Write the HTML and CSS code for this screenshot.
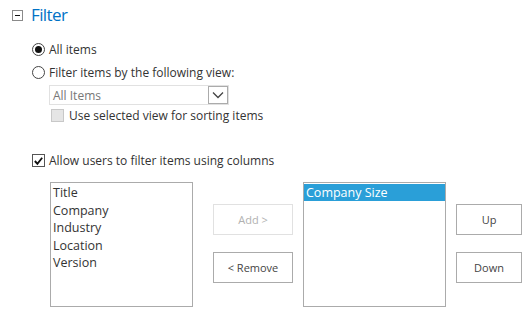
FILE: index.html
```html
<!DOCTYPE html>
<html>
<head>
<meta charset="utf-8">
<link rel="stylesheet" href="styles.css">
</head>
<body>
<div class="page">
  <div class="header">
    <span class="collapse"><span class="minus"></span></span>
    <span class="title">Filter</span>
  </div>
  <div class="options">
    <div class="row radio-row first">
      <span class="radio checked"><span class="dot"></span></span>
      <span class="label">All items</span>
    </div>
    <div class="row radio-row">
      <span class="radio"></span>
      <span class="label">Filter items by the following view:</span>
    </div>
    <div class="select">
      <span class="select-text">All Items</span>
      <span class="select-arrow">
        <svg width="12" height="8" viewBox="0 0 12 8"><path d="M1 1.5 L6 6.5 L11 1.5" fill="none" stroke="#444" stroke-width="1.3"/></svg>
      </span>
    </div>
    <div class="row sub-row">
      <span class="checkbox disabled"></span>
      <span class="label">Use selected view for sorting items</span>
    </div>
    <div class="row allow-row">
      <span class="checkbox checked">
        <svg width="12" height="12" viewBox="0 0 12 12"><path d="M2 6 L4.8 9 L10 2.5" fill="none" stroke="#111" stroke-width="2"/></svg>
      </span>
      <span class="label">Allow users to filter items using columns</span>
    </div>
  </div>
  <div class="columns">
    <div class="listbox">
      <div class="item">Title</div>
      <div class="item">Company</div>
      <div class="item">Industry</div>
      <div class="item">Location</div>
      <div class="item">Version</div>
    </div>
    <div class="buttons mid">
      <div class="btn disabled">Add &gt;</div>
      <div class="btn">&lt; Remove</div>
    </div>
    <div class="listbox right">
      <div class="item selected">Company Size</div>
    </div>
    <div class="buttons side">
      <div class="btn small">Up</div>
      <div class="btn small">Down</div>
    </div>
  </div>
</div>
</body>
</html>
```

FILE: styles.css
```css
html, body {
  margin: 0;
  padding: 0;
  background: #fff;
}
.page {
  font-family: "Open Sans", "Noto Sans", sans-serif;
  font-size: 12px;
  color: #333;
  width: 532px;
  height: 318px;
  overflow: hidden;
}
.header {
  display: flex;
  align-items: center;
  padding-left: 12px;
  padding-top: 2px;
  height: 24px;
}
.collapse {
  width: 9px;
  height: 9px;
  border: 1px solid #8a8a8a;
  display: flex;
  align-items: center;
  justify-content: center;
  margin-top: 2px;
}
.minus {
  width: 5px;
  height: 1px;
  background: #111;
}
.title {
  margin-left: 8px;
  font-size: 17px;
  color: #0072c6;
  letter-spacing: -0.6px;
}
.options {
  padding-left: 32px;
  display: flex;
  flex-direction: column;
}
.row {
  display: flex;
  align-items: center;
  height: 23px;
}
.first {
  margin-top: 12px;
}
.label {
  margin-left: 4px;
  white-space: nowrap;
}
.radio {
  width: 11px;
  height: 11px;
  border: 1px solid #444;
  border-radius: 50%;
  display: flex;
  align-items: center;
  justify-content: center;
  box-sizing: content-box;
}
.dot {
  width: 7px;
  height: 7px;
  border-radius: 50%;
  background: #111;
}
.select {
  margin-left: 17px;
  margin-top: 1px;
  width: 178px;
  height: 18px;
  border: 1px solid #e1e1e1;
  display: flex;
  align-items: center;
  justify-content: space-between;
}
.select-text {
  margin-left: 3px;
  color: #777;
}
.select-arrow {
  width: 18px;
  height: 16px;
  border: 1px solid #ababab;
  display: flex;
  align-items: center;
  justify-content: center;
}
.sub-row {
  margin-left: 19px;
  height: 20px;
}
.checkbox {
  width: 11px;
  height: 11px;
  border: 1px solid #555;
  display: flex;
  align-items: center;
  justify-content: center;
}
.checkbox.disabled {
  background: #e5e5e5;
  border-color: #c8c8c8;
}
.checkbox.disabled + .label {
  margin-left: 5px;
}
.allow-row {
  margin-top: 24px;
}
.columns {
  display: flex;
  margin-top: 10px;
  padding-left: 50px;
  align-items: flex-start;
}
.listbox {
  width: 141px;
  height: 122px;
  border: 1px solid #ababab;
  padding-top: 1px;
  box-sizing: content-box;
}
.item {
  padding-left: 2px;
  height: 17.5px;
  line-height: 17px;
  font-size: 12.5px;
  white-space: nowrap;
}
.item.selected {
  background: #2a9fd8;
  color: #fff;
  height: 17px;
}
.listbox.right {
  margin-left: 10px;
}
.buttons {
  display: flex;
  flex-direction: column;
  gap: 17px;
  margin-top: 22px;
}
.mid {
  margin-left: 20px;
}
.side {
  margin-left: 10px;
}
.btn {
  width: 78px;
  height: 29px;
  border: 1px solid #ababab;
  display: flex;
  align-items: center;
  justify-content: center;
  font-size: 11px;
  color: #444;
}
.btn.disabled {
  border-color: #e1e1e1;
  color: #b1b1b1;
}
.btn.small {
  width: 64px;
}
```
